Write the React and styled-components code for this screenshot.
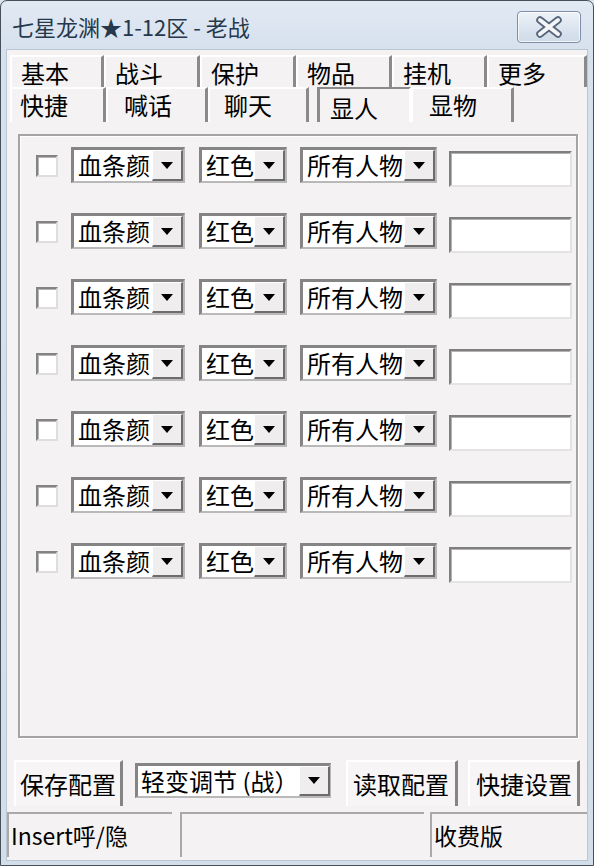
import React from 'react';
import styled, { createGlobalStyle } from 'styled-components';

const FONT = `"Noto Sans CJK SC", "Noto Sans", sans-serif`;
const FACE = '#f5f2f3';

const Global = createGlobalStyle`
  html, body { margin: 0; padding: 0; background: #dbe4ee; }
  body { font-family: ${FONT}; color: #000; }
  * { box-sizing: border-box; }
`;

const Window = styled.div`
  width: 594px;
  height: 866px;
  border: 1px solid #46505b;
  border-radius: 7px 7px 0 0;
  background: linear-gradient(#e1e9f3, #d6e1ee 50px, #d3deeb);
  display: flex;
  flex-direction: column;
  overflow: hidden;
`;

const TitleBar = styled.div`
  height: 49px;
  flex: none;
  display: flex;
  align-items: flex-start;
  justify-content: space-between;
  padding: 0 12px 0 11px;
`;

const Title = styled.div`
  margin-top: 13px;
  font-size: 22px;
  line-height: 1.1;
  color: #26384b;
  white-space: nowrap;
`;

const CloseButton = styled.div`
  margin-top: 10px;
  width: 64px;
  height: 32px;
  border: 1px solid #7d90a8;
  border-radius: 4px;
  background: linear-gradient(#eef3f9, #dbe4ef 55%, #d0dbe9);
  box-shadow: inset 0 0 0 1px rgba(255, 255, 255, 0.7);
  display: flex;
  align-items: center;
  justify-content: center;
`;

const Client = styled.div`
  flex: 1;
  margin: 0 6px 5px 6px;
  background: ${FACE};
  box-shadow: 0 0 0 1px #bac6d3;
  display: flex;
  flex-direction: column;
`;

const TabStrip = styled.div`
  height: 72px;
  flex: none;
  padding-top: 5px;
  display: flex;
  flex-direction: column;
`;

const TabRow = styled.div`
  height: ${(p) => p.$h}px;
  display: flex;
  padding-left: 3px;
`;

const Tab = styled.div`
  width: ${(p) => p.$w}px;
  margin-left: ${(p) => p.$ml || 0}px;
  height: 100%;
  padding-left: ${(p) => p.$pad}px;
  padding-top: ${(p) => (p.$active ? 6 : 3)}px;
  border-top: 2px solid ${(p) => (p.$active ? '#8a8a8a' : '#ffffff')};
  border-left: ${(p) => (p.$active ? '3px solid #8a8a8a' : '2px solid #ffffff')};
  border-right: ${(p) => (p.$active ? '2px solid #ffffff' : '3px solid #8a8a8a')};
  background: ${FACE};
  font-size: 24px;
  line-height: 1.1;
  white-space: nowrap;
`;

const GroupBox = styled.div`
  margin: 12px 9px 0 11px;
  height: 604px;
  flex: none;
  border: 2px solid #a4a4a4;
  box-shadow: inset 1px 1px 0 #ffffff, 1px 1px 0 #ffffff;
  padding: 11px 0 0 16px;
  display: flex;
  flex-direction: column;
  gap: 30px;
`;

const Row = styled.div`
  height: 36px;
  display: flex;
  align-items: flex-start;
`;

const Check = styled.div`
  width: 22px;
  height: 22px;
  margin-top: 8px;
  margin-right: 13px;
  background: #fff;
  border: 2px solid;
  border-color: #838383 #dedede #dedede #838383;
  box-shadow: inset 1px 1px 0 #b5b5b5;
`;

const Combo = styled.div`
  width: ${(p) => p.$w}px;
  height: ${(p) => p.$h || 36}px;
  margin-right: ${(p) => p.$mr || 0}px;
  margin-top: ${(p) => p.$mt || 0}px;
  background: #fff;
  border-style: solid;
  border-width: 3px 2px 2px 3px;
  border-color: #858585 #b9b9b9 #b9b9b9 #858585;
  display: flex;
  align-items: stretch;
`;

const ComboText = styled.div`
  flex: 1;
  padding-left: ${(p) => p.$pad || 4}px;
  font-size: 24px;
  line-height: 1.1;
  display: flex;
  align-items: center;
  white-space: nowrap;
`;

const DropButton = styled.div`
  width: 31px;
  flex: none;
  background: #efedee;
  border-style: solid;
  border-width: 1px 2px 2px 1px;
  border-color: #ffffff #6c6c6c #6c6c6c #ffffff;
  display: flex;
  align-items: center;
  justify-content: center;
`;

const Edit = styled.div`
  width: 123px;
  height: 36px;
  margin-top: 4px;
  background: #fff;
  border: 2px solid;
  border-color: #7f7f7f #e3e3e3 #e3e3e3 #7f7f7f;
  box-shadow: inset 1px 1px 0 #b3b3b3;
`;

const ActionRow = styled.div`
  margin-top: 22px;
  height: 46px;
  flex: none;
  padding-left: 7px;
  display: flex;
  align-items: flex-start;
`;

const Button = styled.div`
  width: ${(p) => p.$w}px;
  height: 46px;
  margin-right: ${(p) => p.$mr || 0}px;
  padding-left: ${(p) => p.$pad}px;
  border-top: 2px solid #ffffff;
  border-left: 2px solid #ffffff;
  border-right: 3px solid #858585;
  background: #f7f5f6;
  font-size: 24px;
  line-height: 1.1;
  display: flex;
  align-items: center;
  white-space: nowrap;
`;

const StatusBar = styled.div`
  margin-top: 6px;
  flex: 1;
  display: flex;
`;

const Panel = styled.div`
  width: ${(p) => p.$w}px;
  margin-right: ${(p) => p.$mr || 0}px;
  height: 45px;
  border-top: 2px solid #a9a9a9;
  border-left: 2px solid #a9a9a9;
  padding-left: 2px;
  font-size: 23px;
  line-height: 1.1;
  display: flex;
  align-items: center;
  white-space: nowrap;
`;

const Arrow = () => (
  <svg width="12" height="7" viewBox="0 0 12 7">
    <polygon points="0,0 12,0 6,7" fill="#000" />
  </svg>
);

const CloseX = () => (
  <svg width="30" height="22" viewBox="0 0 30 22">
    <g strokeLinecap="round">
      <line x1="6" y1="4" x2="24" y2="18" stroke="#56667a" strokeWidth="7.5" />
      <line x1="24" y1="4" x2="6" y2="18" stroke="#56667a" strokeWidth="7.5" />
      <line x1="6" y1="4" x2="24" y2="18" stroke="#f3f5f8" strokeWidth="4" />
      <line x1="24" y1="4" x2="6" y2="18" stroke="#f3f5f8" strokeWidth="4" />
    </g>
  </svg>
);

const topTabs = [
  { label: '基本', w: 94 },
  { label: '战斗', w: 96 },
  { label: '保护', w: 96 },
  { label: '物品', w: 96 },
  { label: '挂机', w: 95 },
  { label: '更多', w: 100 },
];

const bottomTabs = [
  { label: '快捷', w: 96, pad: 8 },
  { label: '喊话', w: 102, pad: 16 },
  { label: '聊天', w: 101, pad: 14 },
  { label: '显人', w: 94, pad: 10, active: true, ml: 8 },
  { label: '显物', w: 103, pad: 16 },
];

const ComboBox = ({ w, text, mr, h, mt, pad }) => (
  <Combo $w={w} $mr={mr} $h={h} $mt={mt}>
    <ComboText $pad={pad}>{text}</ComboText>
    <DropButton>
      <Arrow />
    </DropButton>
  </Combo>
);

export default function App() {
  const rows = Array.from({ length: 7 });
  return (
    <>
      <Global />
      <Window>
        <TitleBar>
          <Title>七星龙渊★1-12区 - 老战</Title>
          <CloseButton>
            <CloseX />
          </CloseButton>
        </TitleBar>
        <Client>
          <TabStrip>
            <TabRow $h={32}>
              {topTabs.map((t) => (
                <Tab key={t.label} $w={t.w} $pad={9}>
                  {t.label}
                </Tab>
              ))}
            </TabRow>
            <TabRow $h={35}>
              {bottomTabs.map((t) => (
                <Tab key={t.label} $w={t.w} $pad={t.pad} $active={t.active} $ml={t.ml}>
                  {t.label}
                </Tab>
              ))}
            </TabRow>
          </TabStrip>
          <GroupBox>
            {rows.map((_, i) => (
              <Row key={i}>
                <Check />
                <ComboBox w={114} text="血条颜" mr={14} />
                <ComboBox w={88} text="红色" mr={13} />
                <ComboBox w={137} text="所有人物" mr={12} />
                <Edit />
              </Row>
            ))}
          </GroupBox>
          <ActionRow>
            <Button $w={109} $pad={4} $mr={12}>保存配置</Button>
            <ComboBox w={196} text="轻变调节 (战）" mr={15} h={35} mt={3} pad={3} />
            <Button $w={112} $pad={5} $mr={10}>读取配置</Button>
            <Button $w={112} $pad={6}>快捷设置</Button>
          </ActionRow>
          <StatusBar>
            <Panel $w={165} $mr={8}>Insert呼/隐</Panel>
            <Panel $w={244} $mr={6}></Panel>
            <Panel $w={157}>收费版</Panel>
          </StatusBar>
        </Client>
      </Window>
    </>
  );
}
